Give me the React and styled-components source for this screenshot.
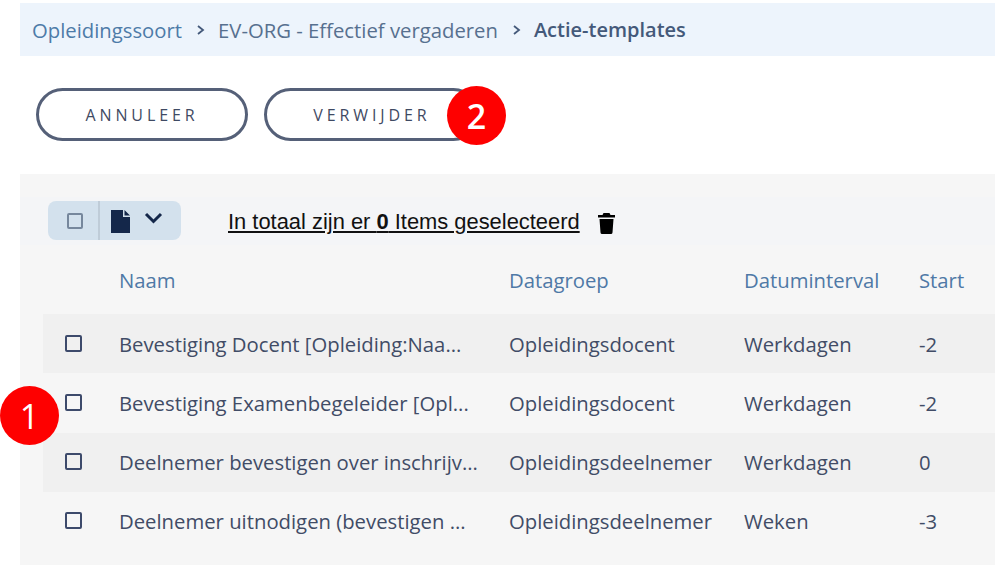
import React from 'react';
import styled, { createGlobalStyle } from 'styled-components';

const GlobalStyle = createGlobalStyle`
  html, body {
    margin: 0;
    padding: 0;
    background: #fff;
    overflow: hidden;
  }
  body {
    font-family: "Open Sans", "Liberation Sans", sans-serif;
  }
`;

const Page = styled.div`
  position: relative;
  width: 995px;
  height: 565px;
  padding: 3px 0 0 20px;
  box-sizing: border-box;
  overflow: hidden;
`;

const Breadcrumb = styled.nav`
  display: flex;
  align-items: center;
  height: 53px;
  padding-left: 12px;
  background: #edf4fc;
  font-size: 20.3px;
  line-height: 52px;
  white-space: nowrap;
`;

const Crumb = styled.span`
  color: ${({ $current, $muted }) =>
    $current ? '#44597a' : $muted ? '#57708f' : '#4d7ba8'};
  font-weight: ${({ $current }) => ($current ? 600 : 400)};
  font-size: ${({ $current }) => ($current ? '20px' : 'inherit')};
`;

const CrumbArrow = styled.svg`
  width: 9px;
  height: 12px;
  margin: 0 13px 0 14px;
  fill: none;
  stroke: #44597a;
  stroke-width: 1.8;
`;

const ButtonRow = styled.div`
  display: flex;
  gap: 16px;
  padding: 32px 0 33px 16px;
`;

const OutlineButton = styled.button`
  width: ${({ $wide }) => ($wide ? '216px' : '212px')};
  height: 53px;
  padding: 0;
  border: 3px solid #556078;
  border-radius: 27px;
  background: #fff;
  color: #3f4a63;
  font-family: inherit;
  font-size: 16px;
  letter-spacing: 3.9px;
`;

const Panel = styled.section`
  height: 391px;
  padding-top: 23px;
  box-sizing: border-box;
  background: #f6f6f6;
`;

const Toolbar = styled.div`
  display: flex;
  align-items: center;
  height: 48px;
  padding-left: 28px;
  background: #f4f5f7;
`;

const ActionGroup = styled.div`
  display: flex;
  align-items: stretch;
  width: 133px;
  height: 39px;
  margin-top: -1px;
  border-radius: 8px;
  background: #d3e1ed;
`;

const ActionCell = styled.div`
  display: flex;
  align-items: center;
  justify-content: center;
  width: 52px;
  padding-left: 4px;
  border-right: 2px solid #bfccd8;
  box-sizing: border-box;
`;

const ActionMenu = styled.div`
  display: flex;
  align-items: flex-start;
  gap: 14px;
  padding: 9px 0 0 11px;
`;

const FileIcon = styled.svg`
  width: 19px;
  height: 23px;
  fill: #14274a;
`;

const ChevronIcon = styled.svg`
  width: 19px;
  height: 12px;
  margin-top: 2px;
  fill: none;
  stroke: #14274a;
  stroke-width: 3;
`;

const CheckBox = styled.span`
  display: block;
  width: ${({ $soft }) => ($soft ? '16px' : '17px')};
  height: ${({ $soft }) => ($soft ? '16px' : '17px')};
  box-sizing: border-box;
  border: 2px solid ${({ $soft }) => ($soft ? '#76879c' : '#3d4a6b')};
  border-radius: 2px;
`;

const Summary = styled.a`
  margin: 2px 0 0 47px;
  color: #111;
  font-family: "Liberation Sans", Arial, sans-serif;
  font-size: 21.9px;
  text-decoration: underline;
  white-space: nowrap;
`;

const TrashIcon = styled.svg`
  width: 17px;
  height: 21px;
  margin: 4px 0 0 18px;
  fill: #000;
`;

const Table = styled.div`
  margin-left: 23px;
`;

const Row = styled.div`
  display: grid;
  grid-template-columns: 76px 390px 235px 175px 1fr;
  align-items: center;
  height: ${({ $head }) => ($head ? '69px' : '59.25px')};
  background: ${({ $shade }) => ($shade ? '#f0f0f0' : 'transparent')};
  color: ${({ $head }) => ($head ? '#4f79a6' : '#414c66')};
  font-size: 20.3px;
  white-space: nowrap;
`;

const CheckCell = styled.div`
  padding-left: 22px;
  margin-top: -1px;
`;

const Badge = styled.div`
  position: absolute;
  left: ${({ $x }) => $x}px;
  top: ${({ $y }) => $y}px;
  display: flex;
  align-items: center;
  justify-content: center;
  width: 59px;
  height: 59px;
  border-radius: 50%;
  background: #fe0000;
  color: #fff;
  font-family: "Open Sans", sans-serif;
  font-size: 34px;
  font-weight: ${({ $bold }) => ($bold ? 600 : 400)};
`;

const rows = [
  ['Bevestiging Docent [Opleiding:Naa...', 'Opleidingsdocent', 'Werkdagen', '-2'],
  ['Bevestiging Examenbegeleider [Opl...', 'Opleidingsdocent', 'Werkdagen', '-2'],
  ['Deelnemer bevestigen over inschrijv...', 'Opleidingsdeelnemer', 'Werkdagen', '0'],
  ['Deelnemer uitnodigen (bevestigen ...', 'Opleidingsdeelnemer', 'Weken', '-3'],
];

const Arrow = () => (
  <CrumbArrow viewBox="0 0 9 12">
    <path d="M2 2l5 4-5 4" />
  </CrumbArrow>
);

export default function App() {
  return (
    <>
      <GlobalStyle />
      <Page>
        <Breadcrumb>
          <Crumb>Opleidingssoort</Crumb>
          <Arrow />
          <Crumb $muted>EV-ORG - Effectief vergaderen</Crumb>
          <Arrow />
          <Crumb $current>Actie-templates</Crumb>
        </Breadcrumb>

        <ButtonRow>
          <OutlineButton>ANNULEER</OutlineButton>
          <OutlineButton $wide>VERWIJDER</OutlineButton>
        </ButtonRow>

        <Panel>
          <Toolbar>
            <ActionGroup>
              <ActionCell>
                <CheckBox $soft />
              </ActionCell>
              <ActionMenu>
                <FileIcon viewBox="0 0 19 23">
                  <path d="M0 0h12v7h7v16H0zM13.500 0L19 5.500h-5.500z" />
                </FileIcon>
                <ChevronIcon viewBox="0 0 19 12">
                  <path d="M2 2l7.500 7.500L17 2" />
                </ChevronIcon>
              </ActionMenu>
            </ActionGroup>
            <Summary>
              In totaal zijn er <b>0</b> Items geselecteerd
            </Summary>
            <TrashIcon viewBox="0 0 17 21">
              <path d="M5.500 0h6l1 2H17v2.500H0V2h4.500zM1.500 6h14l-1 13.500a1.600 1.600 0 0 1-1.600 1.500H4.100a1.600 1.600 0 0 1-1.600-1.500z" />
            </TrashIcon>
          </Toolbar>

          <Table>
            <Row $head>
              <div />
              <div>Naam</div>
              <div>Datagroep</div>
              <div>Datuminterval</div>
              <div>Start</div>
            </Row>
            {rows.map((row, i) => (
              <Row key={row[0]} $shade={i % 2 === 0}>
                <CheckCell>
                  <CheckBox />
                </CheckCell>
                <div>{row[0]}</div>
                <div>{row[1]}</div>
                <div>{row[2]}</div>
                <div>{row[3]}</div>
              </Row>
            ))}
          </Table>
        </Panel>

        <Badge $x={447} $y={86} $bold>2</Badge>
        <Badge $x={0} $y={386}>1</Badge>
      </Page>
    </>
  );
}
